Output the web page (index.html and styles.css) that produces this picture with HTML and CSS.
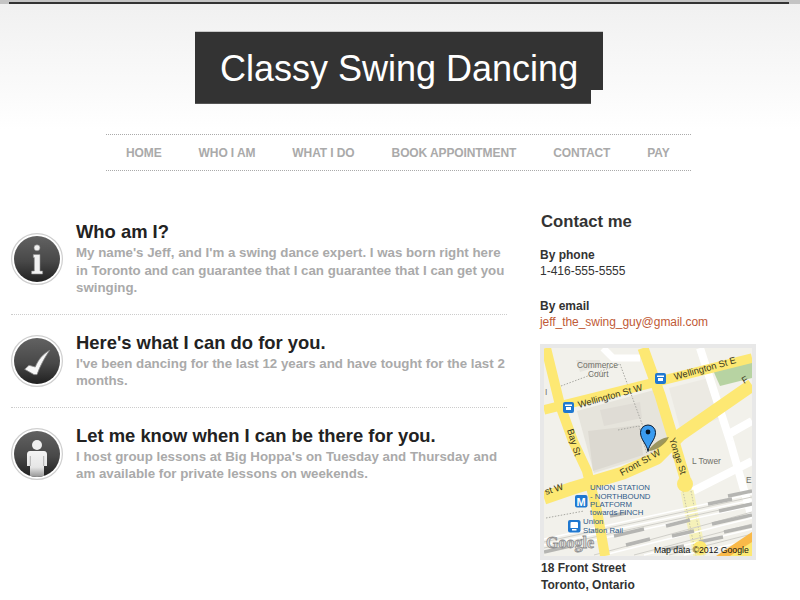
FILE: index.html
```html
<!DOCTYPE html>
<html lang="en">
<head>
<meta charset="utf-8">
<title>Classy Swing Dancing</title>
<link rel="stylesheet" href="styles.css">
</head>
<body>
<div class="topbar"><div class="topbar-inner"></div></div>
<header class="header">
  <div class="logo"><h1 class="logo-text">Classy Swing Dancing</h1></div>
  <nav class="nav">
    <a class="nav-link" href="#">HOME</a>
    <a class="nav-link" href="#">WHO I AM</a>
    <a class="nav-link" href="#">WHAT I DO</a>
    <a class="nav-link" href="#">BOOK APPOINTMENT</a>
    <a class="nav-link" href="#">CONTACT</a>
    <a class="nav-link" href="#">PAY</a>
  </nav>
</header>
<div class="content">
  <main class="main">
    <section class="feature first">
      <svg class="badge" viewBox="0 0 52 52" width="52" height="52">
        <defs>
          <linearGradient id="g" x1="0" y1="0" x2="0" y2="1"><stop offset="0" stop-color="#626262"/><stop offset=".55" stop-color="#484848"/><stop offset="1" stop-color="#202020"/></linearGradient>
          <linearGradient id="p" x1="0" y1="0" x2="0" y2="1"><stop offset="0" stop-color="#f4f4f4"/><stop offset=".6" stop-color="#e6e6e6"/><stop offset="1" stop-color="#8c8c8c"/></linearGradient>
          <clipPath id="c"><circle cx="26" cy="26" r="23"/></clipPath>
        </defs>
        <circle cx="26" cy="26" r="25.400" fill="#fff" stroke="#cfcfcf" stroke-width="1.200"/>
        <circle cx="26" cy="26" r="23" fill="url(#g)"/>
        <g fill="#f2f2f2" stroke="#8a8a8a" stroke-width=".6">
          <circle cx="26" cy="14.800" r="3"/>
          <path d="M22.300 21.500h6.700v16.500h2.600v3h-11v-3h2.700v-13.500h-1z"/>
        </g>
      </svg>
      <div class="feature-body">
        <h2 class="feature-title">Who am I?</h2>
        <p class="feature-text">My name's Jeff, and I'm a swing dance expert. I was born right here in Toronto and can guarantee that I can guarantee that I can get you swinging.</p>
      </div>
    </section>
    <section class="feature">
      <svg class="badge" viewBox="0 0 52 52" width="52" height="52">
        <circle cx="26" cy="26" r="25.400" fill="#fff" stroke="#cfcfcf" stroke-width="1.200"/>
        <circle cx="26" cy="26" r="23" fill="url(#g)"/>
        <path d="M13.700 34.300L18 30.300L24.300 32C27 25 32 19 38.700 15.300C34 22 29 31 26 39.600L23 39.600Z" fill="#f7f7f7" stroke="#8a8a8a" stroke-width=".8"/>
      </svg>
      <div class="feature-body">
        <h2 class="feature-title">Here's what I can do for you.</h2>
        <p class="feature-text">I've been dancing for the last 12 years and have tought for the last 2 months.</p>
      </div>
    </section>
    <section class="feature last">
      <svg class="badge" viewBox="0 0 52 52" width="52" height="52">
        <circle cx="26" cy="26" r="25.400" fill="#fff" stroke="#cfcfcf" stroke-width="1.200"/>
        <circle cx="26" cy="26" r="23" fill="url(#g)"/>
        <circle cx="26" cy="17" r="5" fill="#efefef"/>
        <g clip-path="url(#c)">
          <path d="M19 23h14c2 0 3 1.500 3 3.500v11.500h-3v12h-14v-12h-3v-11.500c0-2 1-3.500 3-3.500z" fill="url(#p)"/>
          <path d="M19.300 28v10M32.700 28v10" stroke="#999" stroke-width=".7" fill="none"/>
        </g>
      </svg>
      <div class="feature-body">
        <h2 class="feature-title">Let me know when I can be there for you.</h2>
        <p class="feature-text">I host group lessons at Big Hoppa's on Tuesday and Thursday and am available for private lessons on weekends.</p>
      </div>
    </section>
  </main>
  <aside class="side">
    <h2 class="side-title">Contact me</h2>
    <p class="contact"><strong class="contact-label">By phone</strong><br>1-416-555-5555</p>
    <p class="contact"><strong class="contact-label">By email</strong><br><a class="mail" href="#">jeff_the_swing_guy@gmail.com</a></p>
    <div class="map">
      <svg class="map-svg" viewBox="0 0 208 208" width="208" height="208">
        <rect width="208" height="208" fill="#f2f1eb"/>
        <path d="M33 63L110 42 128 87 112 106 50 125z" fill="#e6e4dc"/>
        <path d="M44 83L96 77 99 107 49 123z" fill="#dcd9d1"/>
        <path d="M56 62l40-8 2 16-38 8z" fill="#dfdcd5"/>
        <path d="M32 12h24v6l-20 6z" fill="#e7e5de"/>
        <path d="M125 40l40-10 12 40-40 14z" fill="#eceae3"/>
        <path d="M168 20L208 10V30L176 38z" fill="#b7d3a2"/>
        <path d="M156 0L186 93M149 143L208 113M183 87L208 73M186 93L208 170" stroke="#fff" stroke-width="8" fill="none"/>
        <path d="M59 0L69 10H96" stroke="#fff" stroke-width="7" fill="none"/>
        <path d="M17 38L76 16M76 16L104 92M74 82L95 78 103 106M2 170L40 163" stroke="#a8a8a2" stroke-width="1" stroke-dasharray="1.500 1.500" fill="none"/>
        <path d="M143 143L156 208" stroke="#f5f1b9" stroke-width="13" fill="none"/>
        <path d="M139 143L152 208M147 143L160 208" stroke="#c4c2a8" stroke-width="1" stroke-dasharray="1.500 1.500" fill="none"/>
        <path d="M0 197L208 152M0 203L208 158M0 191L208 146M60 207L208 170M100 207L208 181M140 207L208 192" stroke="#fff" stroke-width="1.500" fill="none"/>
        <path d="M0 194L208 149M0 200L208 155M50 207L208 164M90 207L208 176M125 207L208 186" stroke="#d0cfc9" stroke-width="1" fill="none"/>
        <g stroke="#b5b5b2" stroke-width="3.500" fill="none">
          <path d="M70 188l30-7"/><path d="M82 197l24-6"/><path d="M122 178l24-6"/><path d="M128 188l22-5"/><path d="M164 156l24-5"/><path d="M175 163l33-7"/><path d="M168 176l40-9"/><path d="M180 184l28-6"/><path d="M120 202l20-4"/><path d="M155 194l24-5"/><path d="M0 204l26-6"/><path d="M184 148l24-5"/><path d="M66 168l16-3"/>
        </g>
        <g fill="none" stroke="#fde873" stroke-linejoin="round">
          <path d="M2 0L16 57 29 93 43 123 53 163 61 208" stroke-width="10"/>
          <path d="M99 0L116 47 129 90 143 137" stroke-width="11"/>
          <path d="M0 62L208 10" stroke-width="9.500"/>
          <path d="M0 150L29 140 79 125 113 110 136 87 208 37" stroke-width="13"/>
        </g>
        <circle cx="141" cy="136" r="8" fill="#fde873"/>
        <circle cx="156" cy="200" r="7" fill="#fde873"/>
        <path d="M172 208L208 184V208z" fill="#f9b949"/>
        <path d="M186 208L208 194V208z" fill="#fde873"/>
        <text x="33" y="20" class="map-text">Commerce</text>
        <text x="44" y="29" class="map-text">Court</text>
        <text x="35" y="60" class="map-road" transform="rotate(-15.500 35 60)">Wellington St W</text>
        <text x="131" y="32" class="map-road" transform="rotate(-15.500 131 32)">Wellington St E</text>
        <text x="23" y="82" class="map-road" transform="rotate(73 23 82)">Bay St</text>
        <text x="125" y="91" class="map-road" transform="rotate(72 125 91)">Yonge St</text>
        <text x="78" y="128" class="map-road" transform="rotate(-29 78 128)">Front St W</text>
        <text x="2" y="147" class="map-road" transform="rotate(-18 2 147)">st W</text>
        <text x="200" y="36" class="map-road" transform="rotate(-30 200 36)">F</text>
        <text x="148" y="116" class="map-text">L Tower</text>
        <text x="202" y="135" class="map-text">E</text>
        <text x="1" y="47" class="map-text">I</text>
        <text x="46" y="141.500" class="map-blue">UNION STATION</text>
        <text x="46" y="150.500" class="map-blue">- NORTHBOUND</text>
        <text x="46" y="159" class="map-blue">PLATFORM</text>
        <text x="46" y="167" class="map-blue">towards FINCH</text>
        <text x="39" y="176" class="map-blue">Union</text>
        <text x="39" y="184.500" class="map-blue">Station Rail</text>
        <text x="110" y="205" class="map-credit">Map data ©2012 Google</text>
        <text x="2" y="200" class="map-google">Google</text>
        <rect x="31" y="147" width="12.500" height="12.500" rx="2" fill="#1f78d0"/>
        <text x="32.500" y="157.500" class="map-m">M</text>
        <rect x="24" y="172" width="12.500" height="12.500" rx="2" fill="#1f78d0"/>
        <path d="M27.500 174h5.500a1 1 0 0 1 1 1v5h-7.500v-5a1 1 0 0 1 1-1zM28 181h4.500v1.500H28z" fill="#fff"/>
        <rect x="19" y="54" width="11" height="11" rx="2" fill="#1f78d0"/>
        <path d="M21 56.500h7v1.500h-7zM22 59h5v3h-5z" fill="#fff"/>
        <rect x="111" y="25" width="11" height="11" rx="2" fill="#1f78d0"/>
        <path d="M113 27.500h7v1.500h-7zM114 30h5v3h-5z" fill="#fff"/>
        <path d="M104 103C110 94 118 90 125 89 122 96 112 103 104 103z" fill="#8a8240" opacity=".8"/>
        <path d="M104 103.500C103 96 96.500 92 96.500 84.500a7.500 7.500 0 0 1 15 0C111.500 92 105 96 104 103.500z" fill="#3a9bf0" stroke="#071a33" stroke-width="1"/>
        <circle cx="104" cy="84" r="2.400" fill="#061424"/>
      </svg>
    </div>
    <p class="address">18 Front Street<br>Toronto, Ontario</p>
  </aside>
</div>
</body>
</html>
```
FILE: styles.css
```css
* { box-sizing: border-box; }
html, body { margin: 0; padding: 0; height: 600px; overflow: hidden; }
body {
  font-family: "Liberation Sans", Arial, sans-serif;
  font-size: 12px;
  color: #333;
  background: linear-gradient(#f0f0f0 0, #ffffff 130px) no-repeat;
}
.topbar { height: 4px; background: #c4c4c4; padding: 2px 11px 0 9px; }
.topbar-inner { height: 2px; background: #333; }
.header { display: flex; flex-direction: column; align-items: center; padding-top: 27px; }
.logo {
  width: 408px;
  height: 73px;
  margin-right: 2px;
  background: #333;
  border-top: 1px solid #c8c8c8;
  border-bottom: 1px solid #555;
  clip-path: polygon(0 0, 100% 0, 100% 59px, 396px 59px, 396px 100%, 0 100%);
}
.logo-text {
  margin: 0;
  padding: 15px 0 0 25px;
  color: #fff;
  font-size: 36px;
  line-height: 43px;
  font-weight: 400;
  white-space: nowrap;
}
.nav {
  display: flex;
  width: 585px;
  margin: 30px 3px 0 0;
  height: 37px;
  padding: 1px 0 0 20px;
  gap: 37px;
  align-items: center;
  border-top: 1px dotted #aaa;
  border-bottom: 1px dotted #aaa;
}
.nav-link { color: #aaa; font-size: 12px; font-weight: 700; letter-spacing: -.1px; text-decoration: none; }
.content { display: flex; padding: 0 0 0 11px; margin-top: 41px; }
.main { width: 496px; padding-top: 11px; }
.feature {
  display: flex;
  align-items: center;
  gap: 13px;
  padding: 17px 0 17px;
  border-bottom: 1px dotted #ccc;
}
.feature.first { padding-top: 0; margin-top: -2px; }
.feature.last { border-bottom: 0; }
.badge { flex: none; }
.feature-body { flex: 1; }
.feature-title { margin: 0 0 1px; font-size: 18.400px; line-height: 22px; color: #222; font-weight: 700; }
.feature-text { margin: 0; font-size: 13.300px; line-height: 17.500px; color: #aaa; font-weight: 700; }
.side { width: 216px; margin-left: 33px; }
.side-title { margin: 0; padding: 0 0 15px 1px; font-size: 16.700px; line-height: 20px; color: #333; font-weight: 700; }
.contact { margin: 0 0 19px; line-height: 16px; }
.contact-label { color: #333; }
.mail { color: #bf5a36; text-decoration: none; letter-spacing: -.05px; }
.map { width: 216px; height: 216px; padding: 4px; background: #e8e8e8; margin-top: -5px; }
.map-svg { display: block; }
.map-svg text { font-family: "Liberation Sans", Arial, sans-serif; }
.map-text { font-size: 8.400px; fill: #6f6f68; }
.map-road { font-size: 9.400px; fill: #3a3820; }
.map-blue { font-size: 7.800px; fill: #2f5a88; }
.map-credit { font-size: 8.700px; fill: #111; }
.map-svg .map-google { font-family: "Liberation Serif", serif; font-size: 16px; font-weight: 700; fill: #dedede; stroke: #8f8f8f; stroke-width: .8px; }
.map-m { font-size: 11px; font-weight: 700; fill: #fff; }
.address { margin: 0; padding-left: 1px; font-weight: 700; line-height: 17px; color: #333; }
```
